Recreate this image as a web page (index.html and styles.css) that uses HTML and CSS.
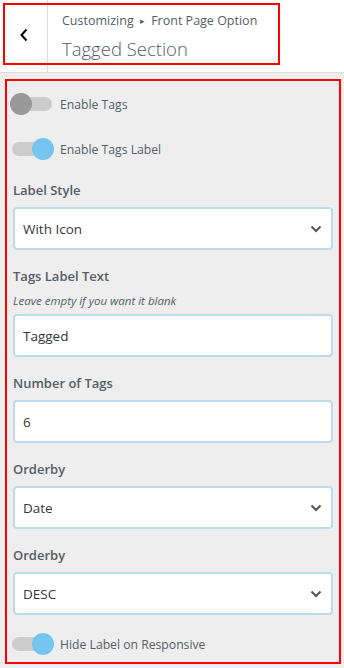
FILE: index.html
```html
<!DOCTYPE html>
<html>
<head>
  <title>Tagged Section</title>
  <link rel="stylesheet" href="styles.css">
</head>
<body>
  <div class="head">
    <button class="back" aria-label="Back">
      <svg width="10" height="14" viewBox="0 0 10 14"><path d="M7.5 1.5 L2.5 7 L7.5 12.5" fill="none" stroke="#000" stroke-width="2"/></svg>
    </button>
    <div class="head-title">
      <div class="crumbs">Customizing <span class="arrow">&#9656;</span> Front Page Option</div>
      <h3>Tagged Section</h3>
    </div>
    <div class="mark"></div>
  </div>

  <div class="panel">
    <div class="toggle-row first">
      <span class="toggle"><span class="knob"></span></span>
      <span class="toggle-label">Enable Tags</span>
    </div>
    <div class="toggle-row">
      <span class="toggle on"><span class="knob"></span></span>
      <span class="toggle-label">Enable Tags Label</span>
    </div>

    <div class="field">
      <label>Label Style</label>
      <div class="select">With Icon
        <svg class="chev" width="12" height="8" viewBox="0 0 12 8"><path d="M1.5 1.5 L6 6 L10.5 1.5" fill="none" stroke="#555" stroke-width="2"/></svg>
      </div>
    </div>

    <div class="field">
      <label>Tags Label Text</label>
      <p class="desc">Leave empty if you want it blank</p>
      <div class="input">Tagged</div>
    </div>

    <div class="field">
      <label>Number of Tags</label>
      <div class="input">6</div>
    </div>

    <div class="field">
      <label>Orderby</label>
      <div class="select">Date
        <svg class="chev" width="12" height="8" viewBox="0 0 12 8"><path d="M1.5 1.5 L6 6 L10.5 1.5" fill="none" stroke="#555" stroke-width="2"/></svg>
      </div>
    </div>

    <div class="field">
      <label>Orderby</label>
      <div class="select">DESC
        <svg class="chev" width="12" height="8" viewBox="0 0 12 8"><path d="M1.5 1.5 L6 6 L10.5 1.5" fill="none" stroke="#555" stroke-width="2"/></svg>
      </div>
    </div>

    <div class="toggle-row last">
      <span class="toggle on"><span class="knob"></span></span>
      <span class="toggle-label">Hide Label on Responsive</span>
    </div>
  </div>
</body>
</html>
```

FILE: styles.css
```css
body {
  margin: 0;
  background-color: #eeeeee;
  font-family: "Open Sans", "Noto Sans", sans-serif;
  color: #555d66;
  width: 344px;
  height: 668px;
  overflow: hidden;
}

/* header */
.head {
  position: relative;
  display: flex;
  height: 72px;
  background-color: #fff;
  border-bottom: 1px solid #dddddd;
}
.back {
  width: 48px;
  border: none;
  border-right: 1px solid #dddddd;
  background: #fff;
  padding: 0;
  display: flex; align-items: center; justify-content: center;
  padding-bottom: 3px;
}
.head-title { padding: 11px 0 0 14px; }
.crumbs { font-size: 12.5px; line-height: 20px; }
.crumbs .arrow { font-size: 9px; margin: 0 3px; position: relative; top: -1px; }
.head-title h3 {
  margin: 4px 0 0;
  font-size: 18.5px; font-weight: 300; line-height: 26px;
  color: #555d66;
}
.mark {
  position: absolute;
  left: 3px; top: 3px;
  width: 273px; height: 58px;
  border: 2px solid #ff0000;
}

/* panel */
.panel {
  margin: 6px 3px 0 5px;
  border: 2px solid #ff0000;
  padding: 12px 6px 7px 6px;
}
.toggle-row { display: flex; align-items: center; height: 22px; margin-bottom: 23px; }
.toggle-row.last { margin-bottom: 0; margin-top: 18px; }
.toggle {
  position: relative;
  width: 44px; height: 22px;
  margin-left: -3px;
}
.toggle::before {
  content: "";
  position: absolute;
  left: 2px; right: 2px; top: 4px; height: 14px;
  border-radius: 7px;
  background-color: #cccccc;
}
.knob {
  position: absolute; left: 0; top: 0;
  width: 22px; height: 22px; border-radius: 50%;
  background-color: #999999;
}
.toggle.on .knob { left: auto; right: 0; background-color: #74c6ef; }
.toggle-label { font-size: 12.2px; margin-left: 6px; }

.field { margin-bottom: 16px; }
.toggle-row + .field { margin-top: -3px; }
.field label {
  display: block;
  font-size: 13px; font-weight: 600; line-height: 20px;
  margin-bottom: 7px;
}
.desc {
  margin: -1px 0 4px;
  font-size: 11.5px; font-style: italic; line-height: 18px;
}
.select, .input {
  position: relative;
  height: 43px;
  box-sizing: border-box;
  border: 2px solid #bcdcee;
  border-radius: 4px;
  background-color: #fff;
  padding: 0 8px;
  display: flex; align-items: center;
  font-size: 13.5px; color: #32373c;
}
.select .chev { position: absolute; right: 9px; top: 16px; }
.field:last-of-type { margin-bottom: 0; }
```
